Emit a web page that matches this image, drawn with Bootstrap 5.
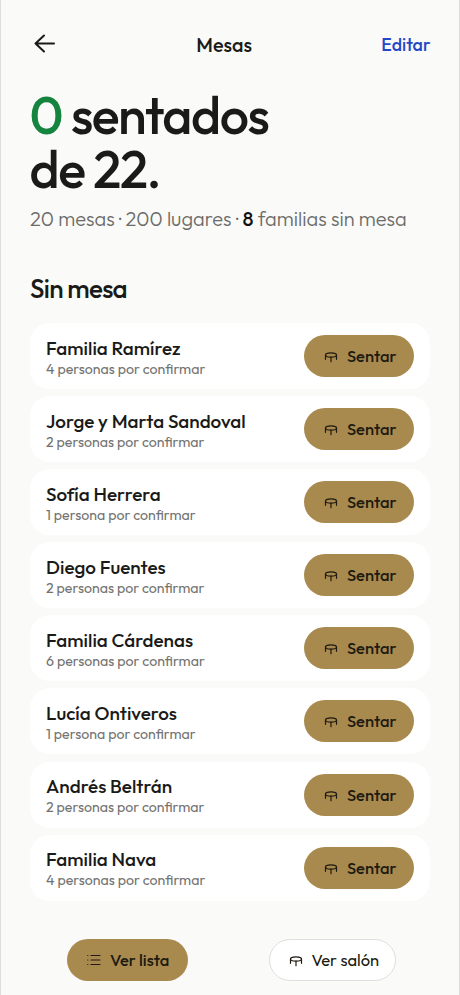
<!DOCTYPE html>
<html lang="es">
<head>
<meta charset="utf-8">
<meta name="viewport" content="width=device-width, initial-scale=1">
<title>Mesas</title>
<link href="https://cdn.jsdelivr.net/npm/bootstrap@5.3.0/dist/css/bootstrap.min.css" rel="stylesheet">
<style>
body{font-family:Outfit,Lato,sans-serif;background:#fafaf8;color:#1a1a18;font-kerning:normal}
.screen{height:995px;border-left:1px solid #dededc;border-right:1px solid #dededc;padding:0 29px;overflow:hidden}
.topbar{height:44px;margin:22px -.5px 0 0}
.back{width:37px;height:44px;padding:0 0 0 3px;color:inherit}
.title{font-size:19.8px;font-weight:500;line-height:26px;padding-top:2px;white-space:nowrap}
.edit{font-size:17.8px;font-weight:500;line-height:26px;padding-top:2px;color:#2348c7}
.headline{font-size:52px;font-weight:500;line-height:54px;letter-spacing:-1.5px;margin:22px 0 0 -.5px;white-space:nowrap}
.headline b{font-weight:500;color:#15843f}
.summary{font-size:20px;font-weight:300;line-height:26px;margin:10px 0 0;color:#6b6b69;white-space:nowrap}
.summary b{font-weight:500;color:#111}
.section-title{font-size:26px;font-weight:500;line-height:32px;letter-spacing:-.7px;margin:41px 0 0}
.families{margin-top:18px;gap:7.1px}
.family{height:66px;border-radius:20px;background:#fff;padding:0 16px}
.name{font-size:18.9px;font-weight:500;line-height:24px;padding-top:1px;white-space:nowrap}
.people{font-size:14.150px;font-weight:400;line-height:17px;padding-top:1px;color:#737371;white-space:nowrap}
.pill{height:42px;border-radius:21px;font-size:16.5px;font-weight:500;line-height:22px;display:flex;align-items:center;white-space:nowrap;color:#201a10;border:0;padding:0 0 0 19px}
.pill svg{flex:none;margin-right:8px}
.gold,.gold:hover{background:#a88a4f;color:#201a10}
.seat{width:110px}
.list-btn{width:121px}
.room-btn{width:127px;background:#fff;border:1px solid #dfdfdc;padding-left:17.500px;font-weight:400}
.actions{margin-top:38px;padding:0 34px 0 37px}
</style>
</head>
<body>
<svg class="d-none">
<symbol id="table" viewBox="0 0 16 16"><g fill="none" stroke="currentColor" stroke-width="1.2" stroke-linecap="round" stroke-linejoin="round"><ellipse cx="8" cy="7" rx="5.500" ry="2.200"/><path d="M2.500 7v4.300M13.500 7v4.300M8 9.200v4.500"/></g></symbol>
</svg>
<main class="screen d-flex flex-column">
<header class="topbar d-flex align-items-center justify-content-between flex-shrink-0">
<button class="btn back border-0 d-flex align-items-center" aria-label="Volver"><svg width="24" height="24" viewBox="0 0 24 24" fill="none" stroke="currentColor" stroke-width="2" stroke-linecap="round" stroke-linejoin="round"><path d="M21 11.500H2.500M11 3.500 2.500 11.500l8.500 8"/></svg></button>
<div class="title"><span>Mesas</span></div>
<a class="edit text-decoration-none" href="#">Editar</a>
</header>
<h1 class="headline"><b>0</b> sentados<br>de 22.</h1>
<p class="summary">20 mesas · 200 lugares · <b>8</b> familias sin mesa</p>
<h2 class="section-title">Sin mesa</h2>
<section class="families d-flex flex-column">
<article class="family d-flex align-items-center justify-content-between"><div><div class="name">Familia Ramírez</div><div class="people">4 personas por confirmar</div></div><button class="btn pill gold seat"><svg width="16" height="16"><use href="#table"/></svg><span>Sentar</span></button></article>
<article class="family d-flex align-items-center justify-content-between"><div><div class="name">Jorge y Marta Sandoval</div><div class="people">2 personas por confirmar</div></div><button class="btn pill gold seat"><svg width="16" height="16"><use href="#table"/></svg><span>Sentar</span></button></article>
<article class="family d-flex align-items-center justify-content-between"><div><div class="name">Sofía Herrera</div><div class="people">1 persona por confirmar</div></div><button class="btn pill gold seat"><svg width="16" height="16"><use href="#table"/></svg><span>Sentar</span></button></article>
<article class="family d-flex align-items-center justify-content-between"><div><div class="name">Diego Fuentes</div><div class="people">2 personas por confirmar</div></div><button class="btn pill gold seat"><svg width="16" height="16"><use href="#table"/></svg><span>Sentar</span></button></article>
<article class="family d-flex align-items-center justify-content-between"><div><div class="name">Familia Cárdenas</div><div class="people">6 personas por confirmar</div></div><button class="btn pill gold seat"><svg width="16" height="16"><use href="#table"/></svg><span>Sentar</span></button></article>
<article class="family d-flex align-items-center justify-content-between"><div><div class="name">Lucía Ontiveros</div><div class="people">1 persona por confirmar</div></div><button class="btn pill gold seat"><svg width="16" height="16"><use href="#table"/></svg><span>Sentar</span></button></article>
<article class="family d-flex align-items-center justify-content-between"><div><div class="name">Andrés Beltrán</div><div class="people">2 personas por confirmar</div></div><button class="btn pill gold seat"><svg width="16" height="16"><use href="#table"/></svg><span>Sentar</span></button></article>
<article class="family d-flex align-items-center justify-content-between"><div><div class="name">Familia Nava</div><div class="people">4 personas por confirmar</div></div><button class="btn pill gold seat"><svg width="16" height="16"><use href="#table"/></svg><span>Sentar</span></button></article>
</section>
<nav class="actions d-flex justify-content-between">
<button class="btn pill gold list-btn"><svg width="16" height="16" viewBox="0 0 16 16" fill="none" stroke="currentColor" stroke-width="1.1" stroke-linecap="round"><path d="M5 3.500h9M5 8h9M5 12.500h9M1.700 3.500h.2M1.700 8h.2M1.700 12.500h.2"/></svg><span>Ver lista</span></button>
<button class="btn pill room-btn"><svg width="16" height="16"><use href="#table"/></svg><span>Ver salón</span></button>
</nav>
</main>
<script src="https://cdn.jsdelivr.net/npm/bootstrap@5.3.0/dist/js/bootstrap.bundle.min.js"></script>
</body>
</html>
